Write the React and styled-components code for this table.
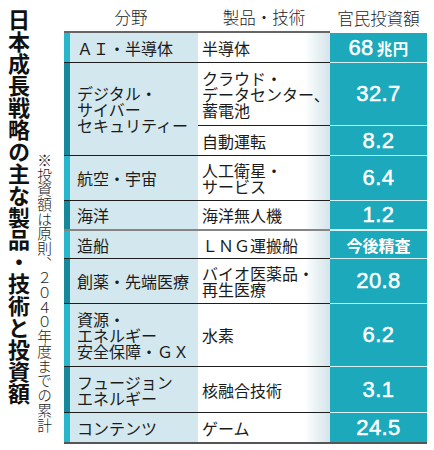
import React from 'react';
import styled, { createGlobalStyle } from 'styled-components';

const Global = createGlobalStyle`
  html, body { margin: 0; padding: 0; background: #fff; }
  body { font-family: "Noto Sans CJK JP", "Noto Sans", sans-serif; color: #1b1b1b; }
`;

const Page = styled.div`
  display: flex;
  width: 434px;
  height: 450px;
`;

const Side = styled.aside`
  width: 64px;
  flex-shrink: 0;
  display: flex;
  gap: 7px;
  padding-left: 8px;
  box-sizing: border-box;
  height: 444px;
`;

const Title = styled.h1`
  writing-mode: vertical-rl;
  margin: 9px 0 0;
  font-size: 22px;
  line-height: 22px;
  font-weight: 700;
  color: #111;
  align-self: flex-start;
`;

const Note = styled.p`
  writing-mode: vertical-rl;
  margin: 0 0 12px;
  font-size: 14.7px;
  line-height: 15px;
  font-weight: 300;
  color: #222;
  align-self: flex-end;
`;

const Table = styled.div`
  width: 363px;
  display: flex;
  flex-direction: column;
  align-self: flex-start;
  border-bottom: 2px solid #555;
`;

const Header = styled.div`
  display: grid;
  grid-template-columns: 134px 132px 97px;
  height: 33px;
`;

const HeadCell = styled.div`
  display: flex;
  align-items: center;
  justify-content: center;
  font-size: 16.5px;
  font-weight: 300;
  color: #222;
  box-sizing: border-box;
  border-bottom: ${p => (p.$line ? '2px solid #666' : 'none')};
  padding-top: 2px;
`;

const lineFor = (kind, light) => {
  if (kind === 'none') return 'none';
  if (light) return kind === 'gray' ? '2px solid #d8f1f5' : '1px solid #d8f1f5';
  if (kind === 'gray') return '2px solid #858585';
  return '1px solid #1e1e1e';
};

const Row = styled.div`
  display: grid;
  grid-template-columns: 6px 128px 229px;
`;

const Bar = styled.div`
  background: ${p => (p.$tone === 'dark' ? '#17889a' : '#28b6ca')};
  border-top: ${p => lineFor(p.$line)};
`;

const Cat = styled.div`
  background: #d3e8ee;
  border-top: ${p => lineFor(p.$line)};
  display: flex;
  align-items: center;
  padding-left: 7px;
  font-size: 16px;
  line-height: 16px;
  font-weight: 400;
  white-space: nowrap;
`;

const Items = styled.div`
  display: flex;
  flex-direction: column;
`;

const Item = styled.div`
  display: grid;
  grid-template-columns: 132px 97px;
  height: ${p => p.$h}px;
`;

const Prod = styled.div`
  box-sizing: border-box;
  border-top: ${p => lineFor(p.$line)};
  background: linear-gradient(90deg, #fff calc(100% - 26px), #d4e4ea);
  display: flex;
  align-items: center;
  padding-left: 4px;
  font-size: 16px;
  line-height: 16px;
  font-weight: 400;
  white-space: nowrap;
`;

const Val = styled.div`
  box-sizing: border-box;
  border-top: ${p => lineFor(p.$line, true)};
  background: #1ba9bb;
  color: #fff;
  display: flex;
  align-items: center;
  justify-content: center;
  font-family: ${p => (p.$cjk ? '"Noto Sans CJK JP", sans-serif' : '"Liberation Sans", Arial, sans-serif')};
  font-size: ${p => (p.$cjk ? '16px' : '22px')};
  font-weight: ${p => (p.$cjk ? 700 : 400)};
  -webkit-text-stroke: ${p => (p.$cjk ? '0' : '0.5px #fff')};
  letter-spacing: ${p => (p.$cjk ? '0' : '0.4px')};
`;

const Unit = styled.span`
  font-family: "Noto Sans CJK JP", sans-serif;
  font-size: 15.5px;
  font-weight: 700;
  -webkit-text-stroke: 0;
  margin-left: 3px;
`;

const Lines = ({ lines }) =>
  <span>{lines.map((l, i) => <React.Fragment key={i}>{i > 0 && <br />}{l}</React.Fragment>)}</span>;

const rows = [
  { cat: ['ＡＩ・半導体'], tone: 'light', line: 'none', items: [{ prod: ['半導体'], val: <>68<Unit>兆円</Unit></>, h: 29 }] },
  { cat: ['デジタル・', 'サイバー', 'セキュリティー'], tone: 'dark', items: [
    { prod: ['クラウド・', 'データセンター、', '蓄電池'], val: '32.7', h: 63 },
    { prod: ['自動運転'], val: '8.2', h: 30 },
  ] },
  { cat: ['航空・宇宙'], tone: 'light', items: [{ prod: ['人工衛星・', 'サービス'], val: '6.4', h: 45 }] },
  { cat: ['海洋'], tone: 'dark', items: [{ prod: ['海洋無人機'], val: '1.2', h: 29 }] },
  { cat: ['造船'], tone: 'light', line: 'gray', items: [{ prod: ['ＬＮＧ運搬船'], val: '今後精査', cjk: true, h: 29 }] },
  { cat: ['創薬・先端医療'], tone: 'dark', items: [{ prod: ['バイオ医薬品・', '再生医療'], val: '20.8', h: 45 }] },
  { cat: ['資源・', 'エネルギー', '安全保障・ＧＸ'], tone: 'light', items: [{ prod: ['水素'], val: '6.2', h: 63 }] },
  { cat: ['フュージョン', 'エネルギー'], tone: 'dark', items: [{ prod: ['核融合技術'], val: '3.1', h: 46 }] },
  { cat: ['コンテンツ'], tone: 'light', items: [{ prod: ['ゲーム'], val: '24.5', h: 30 }] },
];

export default function App() {
  return (
    <>
      <Global />
      <Page>
        <Side>
          <Title>日本成長戦略の主な製品・技術と投資額</Title>
          <Note>※投資額は原則、２０４０年度までの累計</Note>
        </Side>
        <Table>
          <Header>
            <HeadCell $line>分野</HeadCell>
            <HeadCell $line>製品・技術</HeadCell>
            <HeadCell>官民投資額</HeadCell>
          </Header>
          {rows.map((r, i) => {
            const line = r.line || 'dark';
            return (
              <Row key={i}>
                <Bar $tone={r.tone} $line={line} />
                <Cat $line={line}><Lines lines={r.cat} /></Cat>
                <Items>
                  {r.items.map((it, j) => {
                    const l = j === 0 ? line : 'dark';
                    return (
                      <Item key={j} $h={it.h}>
                        <Prod $line={l}><Lines lines={it.prod} /></Prod>
                        <Val $line={l} $cjk={it.cjk}>{it.val}</Val>
                      </Item>
                    );
                  })}
                </Items>
              </Row>
            );
          })}
        </Table>
      </Page>
    </>
  );
}
